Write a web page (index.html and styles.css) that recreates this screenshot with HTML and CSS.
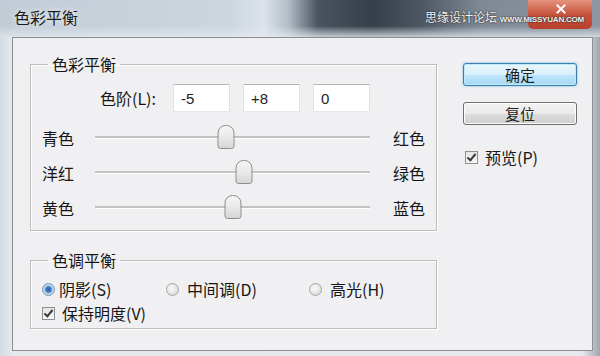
FILE: index.html
```html
<!DOCTYPE html>
<html lang="zh-CN">
<head>
    <meta charset="UTF-8">
    <title>色彩平衡</title>
    <link rel="stylesheet" href="styles.css">
</head>
<body>
    <div class="dialog">
        <div class="titlebar">
            <span class="title">色彩平衡</span>
            <span class="close"></span>
            <span class="watermark">思缘设计论坛 <small>WWW.MISSYUAN.COM</small></span>
        </div>

        <div class="client">
            <div class="main">
                <!-- Color balance -->
                <fieldset class="group balance">
                    <legend>色彩平衡</legend>
                    <div class="levels">
                        <label for="level-1">色阶(L):</label>
                        <input type="text" id="level-1" value="-5">
                        <input type="text" id="level-2" value="+8">
                        <input type="text" id="level-3" value="0">
                    </div>
                    <div class="slider-row">
                        <span>青色</span>
                        <div class="track"><span class="thumb" style="left: 47.5%"></span></div>
                        <span class="end">红色</span>
                    </div>
                    <div class="slider-row">
                        <span>洋红</span>
                        <div class="track"><span class="thumb" style="left: 54%"></span></div>
                        <span class="end">绿色</span>
                    </div>
                    <div class="slider-row">
                        <span>黄色</span>
                        <div class="track"><span class="thumb" style="left: 50%"></span></div>
                        <span class="end">蓝色</span>
                    </div>
                </fieldset>

                <!-- Tone balance -->
                <fieldset class="group tone">
                    <legend>色调平衡</legend>
                    <div class="radios">
                        <label class="option"><span class="radio on"></span>阴影(S)</label>
                        <label class="option"><span class="radio"></span>中间调(D)</label>
                        <label class="option"><span class="radio"></span>高光(H)</label>
                    </div>
                    <label class="option check-row"><span class="checkbox"></span>保持明度(V)</label>
                </fieldset>
            </div>

            <div class="side">
                <button class="btn default">确定</button>
                <button class="btn">复位</button>
                <label class="option preview"><span class="checkbox"></span>预览(P)</label>
            </div>
        </div>
    </div>
</body>
</html>
```

FILE: styles.css
```css
body {
    margin: 0;
    overflow: hidden;
    font-family: "Noto Sans CJK SC", "Liberation Sans", sans-serif;
    font-size: 16px;
    color: #161616;
    background: linear-gradient(90deg, #d3dbe3 0, #e4e9ee 12px, #e6eaee 97%, #9ea6ae 100%);
}

.dialog {
    width: 600px;
    height: 356px;
}

/* Title bar */
.titlebar {
    position: relative;
    height: 37px;
    display: flex;
    align-items: center;
    background:
        linear-gradient(180deg, rgba(255, 255, 255, 0) 70%, rgba(226, 232, 238, 0.8) 100%),
        linear-gradient(90deg, #c2ccd6 0, #cdd6df 38%, #dce3ea 44%, #b4bec8 48%, #4a545f 53%, #363f49 62%, #4c5661 70%, #7e8995 80%, #8c97a3 100%);
}

.title {
    padding-left: 14px;
    padding-bottom: 3px;
    font-size: 16px;
    color: #1a1a1a;
    text-shadow: 0 0 6px rgba(255, 255, 255, 0.9);
}

/* close button, the X drawn with two bars */
.close {
    position: absolute;
    top: 0;
    right: 8px;
    width: 64px;
    height: 29px;
    border-radius: 0 0 5px 5px;
    background: linear-gradient(180deg, #e6947f 0, #c6533d 50%, #b8402c 100%);
}

.close::before,
.close::after {
    content: "";
    position: absolute;
    left: 27px;
    top: 8px;
    width: 12px;
    height: 2px;
    background-color: #fff;
    transform: rotate(45deg);
}

.close::after {
    transform: rotate(-45deg);
}

.watermark {
    position: absolute;
    top: 8px;
    left: 425px;
    font-size: 12px;
    color: #f2f2f2;
    text-shadow: 0 0 2px #2a2a2a, 0 0 1px #2a2a2a;
    white-space: nowrap;
}

.watermark small {
    font-family: "Liberation Sans", sans-serif;
    font-size: 8px;
    font-weight: bold;
    letter-spacing: -0.2px;
}

/* Client area */
.client {
    display: flex;
    height: 312px;
    margin: 0 7px 0 12px;
    border: 1px solid #8b8f94;
    background-color: #f0eff1;
}

.main {
    padding: 16px 0 0 17px;
}

.group {
    width: 407px;
    box-sizing: border-box;
    margin: 0;
    padding: 10px 11px 5px;
    border: 1px solid #bcbcbc;
    box-shadow: inset 1px 1px 0 #fff, 1px 1px 0 #fff;
}

.group legend {
    margin-left: 6px;
    padding: 0 4px;
    line-height: 20px;
}

.tone {
    margin-top: 19px;
    padding-bottom: 6px;
}

/* Levels inputs */
.levels {
    display: flex;
    align-items: center;
    gap: 13px;
    height: 28px;
    padding-left: 58px;
}

.levels label {
    width: 60px;
}

.levels input[type="text"] {
    width: 57px;
    height: 28px;
    box-sizing: border-box;
    padding: 0 7px;
    border: 1px solid;
    border-color: #b4b4b4 #e2e2e2 #e8e8e8 #e2e2e2;
    background-color: #fff;
    font-family: "Liberation Sans", sans-serif;
    font-size: 15px;
    color: #222;
}

/* Sliders */
.slider-row {
    display: grid;
    grid-template-columns: 53px 275px auto;
    align-items: center;
    height: 35px;
}

.levels + .slider-row {
    margin-top: 8px;
}

.slider-row .end {
    margin-left: 23px;
}

.track {
    position: relative;
    height: 2px;
    background-color: #c2c2c2;
    border-bottom: 1px solid #fff;
}

.thumb {
    position: absolute;
    top: 50%;
    width: 15px;
    height: 22px;
    transform: translate(-50%, -50%);
    border: 1px solid #8c8c8c;
    border-radius: 8px 8px 3px 3px;
    background: linear-gradient(180deg, #f6f6f6 0, #e8e8e8 55%, #d6d6d6 100%);
}

/* Radios and checkboxes */
.option {
    display: flex;
    align-items: center;
    height: 18px;
}

.radios {
    display: grid;
    grid-template-columns: 124px 143px auto;
    height: 18px;
}

.radio {
    width: 11px;
    height: 11px;
    margin-right: 8px;
    border: 1px solid #a6a6a6;
    border-radius: 50%;
    background: radial-gradient(circle at 40% 40%, #fafafa 0, #e2e2e2 60%, #cfcfcf 100%);
}

.radio.on {
    margin-right: 4px;
    border-color: #6a8fb5;
    background: radial-gradient(circle, #2c63a8 0, #3b78bd 2.5px, #a9c8e6 4px, #e9f0f7 6px);
}

.checkbox {
    position: relative;
    width: 11px;
    height: 11px;
    margin-right: 7px;
    border: 1px solid #8e8f8f;
    background: linear-gradient(180deg, #e6e6e6 0, #f6f6f6 100%);
}

.checkbox::after {
    content: "";
    position: absolute;
    left: 3px;
    top: 0;
    width: 3px;
    height: 7px;
    border: solid #3a3a3a;
    border-width: 0 2px 2px 0;
    transform: rotate(40deg);
}

.check-row {
    margin-top: 6px;
}

/* Side buttons */
.side {
    display: flex;
    flex-direction: column;
    margin-left: 26px;
    padding-top: 25px;
}

.btn {
    width: 114px;
    height: 23px;
    padding: 0;
    border: 1px solid #707070;
    border-radius: 3px;
    background: linear-gradient(180deg, #f2f2f2 0, #ebebeb 50%, #dddddd 51%, #cfcfcf 100%);
    font-family: "Noto Sans CJK SC", sans-serif;
    font-size: 15px;
    line-height: 20px;
    color: #1e1e1e;
    box-shadow: inset 0 0 0 1px #fcfcfc;
}

.btn.default {
    border-color: #3c7fb1;
    background: linear-gradient(180deg, #eaf6fd 0, #d9f0fc 50%, #bee6fd 51%, #a7d9f5 100%);
    box-shadow: inset 0 0 0 1px #bdeaf9, 0 0 2px #48a5d8;
}

.btn + .btn {
    margin-top: 16px;
}

.preview {
    margin-top: 24px;
    height: 16px;
    padding-left: 2px;
}
```
